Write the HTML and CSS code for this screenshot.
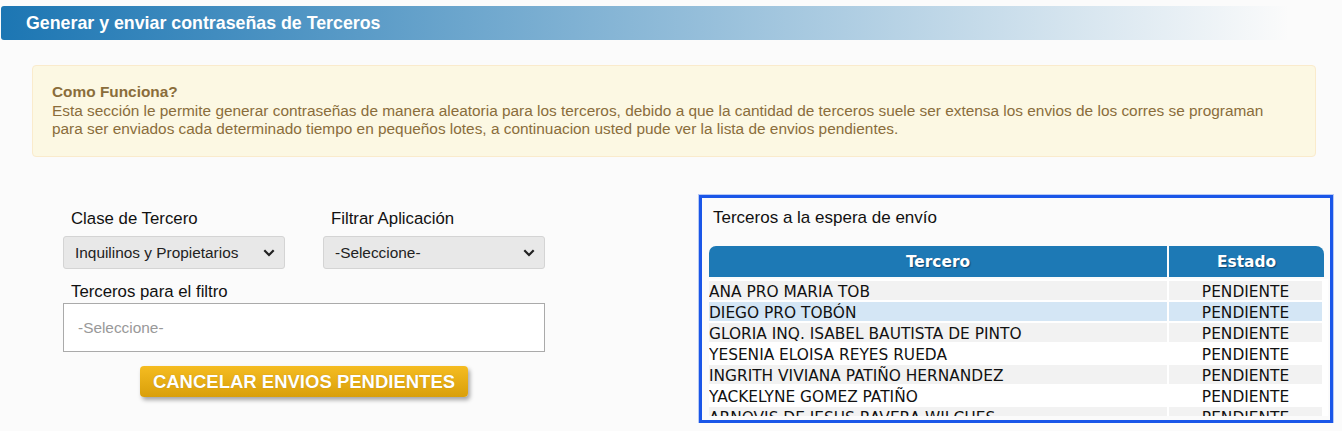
FILE: index.html
```html
<!DOCTYPE html>
<html lang="es">
<head>
<meta charset="utf-8">
<title>Generar y enviar contraseñas de Terceros</title>
<link rel="stylesheet" href="styles.css">
</head>
<body>
<header class="page-title">Generar y enviar contraseñas de Terceros</header>

<div class="alert">
  <strong>Como Funciona?</strong><br>
  Esta sección le permite generar contraseñas de manera aleatoria para los terceros, debido a que la cantidad de terceros suele ser extensa los envios de los corres se programan para ser enviados cada determinado tiempo en pequeños lotes, a continuacion usted pude ver la lista de envios pendientes.
</div>

<main class="content">
  <section class="filters">
    <div class="field-row">
      <div class="field">
        <label class="field-label" for="clase">Clase de Tercero</label>
        <div class="select-wrap">
          <select class="select" id="clase"><option>Inquilinos y Propietarios</option></select>
          <svg class="chevron" width="12" height="8" viewBox="0 0 12 8"><path d="M1.3 1.3 L6 6 L10.7 1.3" fill="none" stroke="#222" stroke-width="2.2"/></svg>
        </div>
      </div>
      <div class="field">
        <label class="field-label" for="app">Filtrar Aplicación</label>
        <div class="select-wrap">
          <select class="select" id="app"><option>-Seleccione-</option></select>
          <svg class="chevron" width="12" height="8" viewBox="0 0 12 8"><path d="M1.3 1.3 L6 6 L10.7 1.3" fill="none" stroke="#222" stroke-width="2.2"/></svg>
        </div>
      </div>
    </div>
    <label class="field-label field-label-gap">Terceros para el filtro</label>
    <div class="multi">-Seleccione-</div>
    <button class="btn-cancel" type="button">CANCELAR ENVIOS PENDIENTES</button>
  </section>

  <section class="queue">
    <h2 class="queue-title">Terceros a la espera de envío</h2>
    <table class="grid-head">
      <colgroup><col class="col-name"><col></colgroup>
      <tr><th>Tercero</th><th>Estado</th></tr>
    </table>
    <div class="grid-body">
      <table class="grid">
        <colgroup><col class="col-name"><col></colgroup>
        <tr><td>ANA PRO MARIA TOB</td><td>PENDIENTE</td></tr>
        <tr class="selected"><td>DIEGO PRO TOBÓN</td><td>PENDIENTE</td></tr>
        <tr><td>GLORIA INQ. ISABEL BAUTISTA DE PINTO</td><td>PENDIENTE</td></tr>
        <tr><td>YESENIA ELOISA REYES RUEDA</td><td>PENDIENTE</td></tr>
        <tr><td>INGRITH VIVIANA PATIÑO HERNANDEZ</td><td>PENDIENTE</td></tr>
        <tr><td>YACKELYNE GOMEZ PATIÑO</td><td>PENDIENTE</td></tr>
        <tr><td>ARNOVIS DE JESUS RAVERA WILCHES</td><td>PENDIENTE</td></tr>
        <tr><td>LUZ MARINA OSORIO CASTAÑO</td><td>PENDIENTE</td></tr>
        <tr><td>CARLOS ALBERTO MEJIA RESTREPO</td><td>PENDIENTE</td></tr>
        <tr><td>MARTHA LUCIA GIRALDO DUQUE</td><td>PENDIENTE</td></tr>
        <tr><td>JORGE IVAN SALAZAR LOPEZ</td><td>PENDIENTE</td></tr>
        <tr><td>BEATRIZ ELENA CARDONA ARANGO</td><td>PENDIENTE</td></tr>
        <tr><td>HERNAN DARIO MONTOYA RIOS</td><td>PENDIENTE</td></tr>
        <tr><td>CLAUDIA PATRICIA VELEZ OCHOA</td><td>PENDIENTE</td></tr>
        <tr><td>JUAN CAMILO RAMIREZ TORO</td><td>PENDIENTE</td></tr>
        <tr><td>SANDRA MILENA OSPINA GIL</td><td>PENDIENTE</td></tr>
        <tr><td>LUIS FERNANDO ZAPATA MUÑOZ</td><td>PENDIENTE</td></tr>
        <tr><td>DIANA MARCELA QUINTERO SOTO</td><td>PENDIENTE</td></tr>
        <tr><td>OSCAR EDUARDO HENAO BEDOYA</td><td>PENDIENTE</td></tr>
        <tr><td>PAOLA ANDREA JARAMILLO RUIZ</td><td>PENDIENTE</td></tr>
        <tr><td>GUSTAVO ADOLFO CORREA PEÑA</td><td>PENDIENTE</td></tr>
        <tr><td>ADRIANA MARIA BOTERO VARGAS</td><td>PENDIENTE</td></tr>
        <tr><td>FABIO NELSON AGUDELO MARIN</td><td>PENDIENTE</td></tr>
        <tr><td>NATALIA ISABEL SUAREZ LONDOÑO</td><td>PENDIENTE</td></tr>
        <tr><td>RICARDO ANTONIO POSADA VILLA</td><td>PENDIENTE</td></tr>
        <tr><td>ANGELA MARIA ECHEVERRI MORA</td><td>PENDIENTE</td></tr>
        <tr><td>WILSON ENRIQUE CASTRO LEON</td><td>PENDIENTE</td></tr>
        <tr><td>MONICA ALEJANDRA RINCON PARRA</td><td>PENDIENTE</td></tr>
        <tr><td>ALVARO JOSE SIERRA URIBE</td><td>PENDIENTE</td></tr>
        <tr><td>ELIZABETH RAMOS CIFUENTES</td><td>PENDIENTE</td></tr>
        <tr><td>FREDY ALONSO VALENCIA CANO</td><td>PENDIENTE</td></tr>
        <tr><td>JOHANA ANDREA MOLINA PEREZ</td><td>PENDIENTE</td></tr>
        <tr><td>MAURICIO GOMEZ ALZATE</td><td>PENDIENTE</td></tr>
        <tr><td>LILIANA PATRICIA ROJAS NIETO</td><td>PENDIENTE</td></tr>
        <tr><td>SERGIO ANDRES TABARES DIAZ</td><td>PENDIENTE</td></tr>
        <tr><td>VIVIANA ESTELLA ARIAS MESA</td><td>PENDIENTE</td></tr>
        <tr><td>EDGAR HUMBERTO FRANCO VERA</td><td>PENDIENTE</td></tr>
        <tr><td>CATALINA GARCIA SALDARRIAGA</td><td>PENDIENTE</td></tr>
        <tr><td>RUBEN DARIO CALLE ESCOBAR</td><td>PENDIENTE</td></tr>
        <tr><td>GLADYS AMPARO VALLEJO TAPIAS</td><td>PENDIENTE</td></tr>
        <tr><td>JAVIER MAURICIO PINEDA LOAIZA</td><td>PENDIENTE</td></tr>
        <tr><td>ROSA ELVIRA HOYOS GUTIERREZ</td><td>PENDIENTE</td></tr>
      </table>
    </div>
  </section>
</main>
</body>
</html>
```

FILE: styles.css
```css
body {
  margin: 0;
  background: #fbfbfb;
  font-family: "Liberation Sans", Arial, sans-serif;
  color: #111;
}

/* Page title bar, fading out to the right */
.page-title {
  margin: 6px 0 0 1px;
  height: 34px;
  padding-left: 25px;
  display: flex;
  align-items: center;
  font-size: 17.8px;
  font-weight: bold;
  color: #fff;
  background: linear-gradient(to right, #1c76b3 0, rgba(251, 251, 251, 0) 1289px) no-repeat;
  border-radius: 3px 0 0 3px;
}

/* Info notice */
.alert {
  margin: 25px 26px 0 32px;
  padding: 17px 19px;
  background: #fcf8e3;
  border: 1px solid #faebcc;
  border-radius: 4px;
  color: #8a6d3b;
  font-size: 15.4px;
  line-height: 18.7px;
}

.content {
  display: flex;
  align-items: flex-start;
  margin-top: 38px;
}

/* Left column: filters */
.filters {
  margin-left: 63px;
  padding-top: 14px;
  width: 482px;
  display: flex;
  flex-direction: column;
}

.field-row {
  display: flex;
  gap: 38px;
}

.field {
  width: 222px;
  display: flex;
  flex-direction: column;
}

.field-label {
  font-size: 16.8px;
  line-height: 20px;
  padding-left: 8px;
  color: #111;
}

.field-label-gap {
  margin-top: 13px;
}

.select-wrap {
  position: relative;
  margin-top: 7px;
  height: 33px;
}

.select {
  appearance: none;
  -webkit-appearance: none;
  box-sizing: border-box;
  width: 100%;
  height: 33px;
  margin: 0;
  border: 1px solid #d4d4d4;
  border-radius: 3px;
  background: #e8e8e8;
  font-family: "Liberation Sans", Arial, sans-serif;
  font-size: 15.4px;
  color: #222;
  padding: 0 0 0 11px;
}

.chevron {
  position: absolute;
  right: 10px;
  top: 13px;
  pointer-events: none;
}

.multi {
  margin-top: 1px;
  height: 49px;
  box-sizing: border-box;
  border: 1px solid #aaa;
  background: #fff;
  padding-left: 14px;
  display: flex;
  align-items: center;
  color: #999;
  font-size: 15.4px;
}

.btn-cancel {
  align-self: center;
  margin-top: 14px;
  height: 31px;
  padding: 0 13px;
  border: none;
  border-radius: 4px;
  background: linear-gradient(to bottom, #f5bc21, #d99f0a);
  box-shadow: 2px 3px 4px rgba(0, 0, 0, 0.35);
  color: #fff;
  font-family: "Liberation Sans", Arial, sans-serif;
  font-size: 18.5px;
  font-weight: bold;
  text-shadow: 0 0 1px rgba(120, 80, 0, 0.4);
}

/* Right column: pending queue */
.queue {
  margin-left: auto;
  margin-right: 9px;
  width: 634px;
  height: 228px;
  box-sizing: border-box;
  border: 3px solid #1a56e8;
  box-shadow: 0 0 0 1px rgba(26, 86, 232, 0.3);
  padding: 10px 2px 4px 7px;
  display: flex;
  flex-direction: column;
}

.queue-title {
  margin: 0 0 18px 4px;
  font-size: 17px;
  font-weight: normal;
  line-height: 20px;
  color: #111;
}

.grid-head,
.grid {
  border-collapse: separate;
  border-spacing: 0;
  table-layout: fixed;
}

.grid-head {
  width: 615px;
}

.col-name {
  width: 460px;
}

.grid-head th {
  height: 31px;
  padding: 0;
  background: #1d79b5;
  color: #fff;
  font-family: "DejaVu Sans", Verdana, sans-serif;
  font-size: 15.4px;
  font-weight: bold;
  text-shadow: 1px 1px 1px rgba(0, 30, 60, 0.55);
}

.grid-head th:first-child {
  border-right: 2px solid #fbfbfb;
  border-top-left-radius: 7px;
}

.grid-head th:last-child {
  border-top-right-radius: 8px;
}

.grid-body {
  margin-top: 2px;
  height: 137px;
  overflow-y: scroll;
  background: #fff;
}

.grid-body::-webkit-scrollbar {
  width: 5px;
}

.grid-body::-webkit-scrollbar-track {
  background: #f3f3f3;
}

.grid-body::-webkit-scrollbar-thumb {
  background: #c1c1c1;
  border-left: 1px solid #fff;
}

.grid {
  width: 613px;
}

/* 21px row pitch: 2px white gap + 19px cell */
.grid td {
  height: 15px;
  padding: 4px 0 0;
  border-top: 2px solid #fff;
  font-family: "DejaVu Sans", Verdana, sans-serif;
  font-size: 15.4px;
  line-height: 15px;
  color: #111;
  white-space: nowrap;
  overflow: hidden;
}

.grid td:first-child {
  border-right: 2px solid #fff;
}

.grid td:last-child {
  text-align: center;
}

.grid tr:nth-child(odd) td {
  background: #f2f2f2;
}

.grid tr.selected td {
  background: #d4e6f5;
}
```
